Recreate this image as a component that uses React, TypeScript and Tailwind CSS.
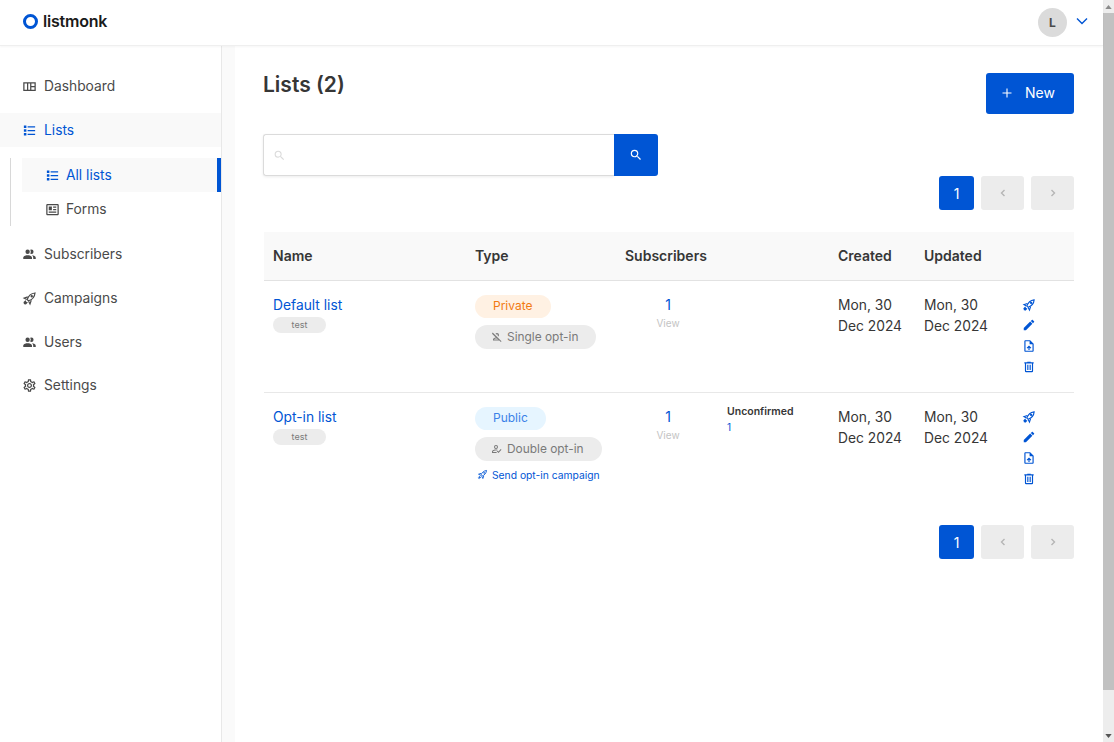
import { MdOutlineSettings } from 'react-icons/md';

const PATHS = {
  list: 'M3,4H7V8H3V4M9,5V7H21V5H9M3,10H7V14H3V10M9,11V13H21V11H9M3,16H7V20H3V16M9,17V19H21V17H9',
  people:
    'M16 17V19H2V17S2 13 9 13 16 17 16 17M12.5 7.5A3.5 3.5 0 1 0 9 11A3.5 3.5 0 0 0 12.5 7.5M15.94 13A5.32 5.32 0 0 1 18 17V19H22V17S22 13.37 15.94 13M15 4A3.39 3.39 0 0 0 13.07 4.59A5 5 0 0 1 13.07 10.41A3.39 3.39 0 0 0 15 11A3.5 3.5 0 0 0 15 4Z',
  magnify:
    'M9.5,3A6.5,6.5 0 0,1 16,9.5C16,11.11 15.41,12.59 14.44,13.73L14.71,14H15.5L20.5,19L19,20.5L14,15.5V14.71L13.73,14.44C12.59,15.41 11.11,16 9.5,16A6.5,6.5 0 0,1 3,9.5A6.5,6.5 0 0,1 9.5,3M9.5,5C7,5 5,7 5,9.5C5,12 7,14 9.5,14C12,14 14,12 14,9.5C14,7 12,5 9.5,5Z',
  pencil:
    'M20.71,7.04C21.1,6.65 21.1,6 20.71,5.63L18.37,3.29C18,2.9 17.35,2.9 16.96,3.29L15.12,5.12L18.87,8.87M3,17.25V21H6.75L17.81,9.93L14.06,6.18L3,17.25Z',
  trash:
    'M9,3V4H4V6H5V19A2,2 0 0,0 7,21H17A2,2 0 0,0 19,19V6H20V4H15V3H9M7,6H17V19H7V6M9,8V17H11V8H9M13,8V17H15V8H13Z',
  upload:
    'M14,2H6C4.89,2 4,2.9 4,4V20C4,21.1 4.89,22 6,22H18C19.1,22 20,21.1 20,20V8L14,2M18,20H6V4H13V9H18V20M8,15.01L9.41,16.42L11,14.84V19H13V14.84L14.59,16.43L16,15.01L12.01,11L8,15.01Z',
  dashboard: 'M2 5H22V19H2V5M4 7V17H8V7H4M10 7V17H13V7H10M15 7V11H20V7H15M15 13V17H20V13H15Z',
  newspaper:
    'M20 3H4C2.89 3 2 3.89 2 5V19C2 20.11 2.89 21 4 21H20C21.11 21 22 20.11 22 19V5C22 3.89 21.11 3 20 3M20 19H4V5H20V19M6 7H11V13H6V7M13 7H18V9H13V7M13 11H18V13H13V11M6 15H18V17H6V15Z',
  accountOff:
    'M12 4A4 4 0 0 1 16 8A4 4 0 0 1 14.6 11L13.2 9.6A2 2 0 0 0 10.4 6.8L9 5.4A4 4 0 0 1 12 4M3.3 3L21 20.7L19.7 22L16.7 19H4V17C4 15 6.5 13.6 9.6 13.1L2 5.3L3.3 3M6 17H14.7L11.6 14.9C8.5 15 6 16 6 17Z',
  accountCheck:
    'M10 4A4 4 0 0 1 14 8A4 4 0 0 1 10 12A4 4 0 0 1 6 8A4 4 0 0 1 10 4M10 6A2 2 0 0 0 8 8A2 2 0 0 0 10 10A2 2 0 0 0 12 8A2 2 0 0 0 10 6M10 13C11 13 12 13.1 13 13.4L11.3 15.1C10.9 15 10.4 15 10 15C7 15 4 16.4 4 17V18H10.5L12 20H2V17C2 14.3 7.3 13 10 13M19.5 12L21 13.5L15 20L11.5 16.5L13 15L15 17L19.5 12Z',
};

type IconName = keyof typeof PATHS;

function Icon({ name, className }: { name: IconName; className: string }) {
  return (
    <svg viewBox="0 0 24 24" fill="currentColor" className={className}>
      <path d={PATHS[name]} />
    </svg>
  );
}

// outlined rocket, long body pointing up-right with two fins and exhaust marks
function Rocket({ className }: { className: string }) {
  return (
    <svg viewBox="0 0 24 24" fill="none" stroke="currentColor" strokeWidth="1.9" className={className}>
      <path d="M9.3 14.8L8.4 13.6C10 8.6 14.6 3.9 20.8 3.2C20.3 9.4 15.6 14 10.6 15.7Z" />
      <path d="M9.2 9.4L3.4 11.4L7.6 13.6M14.8 14.9L12.8 20.8L10.6 16.4" />
      <circle cx="15.6" cy="8.5" r="1" />
      <path d="M6.2 15.4L2.8 18.8M8.6 17.8L5.2 21.2M6.8 17.2L3.2 20.8" />
    </svg>
  );
}

function NavItem({
  icon,
  label,
  active,
  className = '',
}: {
  icon: React.ReactNode;
  label: string;
  active?: boolean;
  className?: string;
}) {
  return (
    <a
      className={`flex h-[34px] items-center gap-[7px] pl-[22px] text-[13.8px] ${
        active ? 'bg-[#f9f9f9] text-[#0055d4]' : 'text-[#4a4a4a]'
      } ${className}`}
    >
      {icon}
      <span>{label}</span>
    </a>
  );
}

function Sidebar() {
  return (
    <aside className="w-[222px] shrink-0 border-r border-[#e8e8e8] pt-[23px]">
      <div className="flex flex-col gap-[10px]">
        <NavItem label="Dashboard" icon={<Icon name="dashboard" className="h-[15px] w-[15px]" />} />
        <NavItem active label="Lists" icon={<Icon name="list" className="h-[15px] w-[15px]" />} />
      </div>
      <div className="ml-[10px] mt-[11px] border-l border-[#d8d8d8]">
        <a className="ml-[11px] flex h-[34px] items-center gap-[6px] border-r-4 border-[#0055d4] bg-[#f9f9f9] pl-[23px] text-[13.8px] text-[#0055d4]">
          <Icon name="list" className="h-[15px] w-[15px]" />
          <span>All lists</span>
        </a>
        <a className="ml-[11px] flex h-[34px] items-center gap-[6px] pl-[23px] text-[13.8px] text-[#4a4a4a]">
          <Icon name="newspaper" className="h-[15px] w-[15px]" />
          <span>Forms</span>
        </a>
      </div>
      <div className="mt-[11px] flex flex-col gap-[10px]">
        <NavItem label="Subscribers" icon={<Icon name="people" className="h-[15px] w-[15px]" />} />
        <NavItem label="Campaigns" icon={<Rocket className="h-[15px] w-[15px]" />} />
        <NavItem label="Users" icon={<Icon name="people" className="h-[15px] w-[15px]" />} />
        <NavItem
          label="Settings"
          className="mt-[-1px]"
          icon={<MdOutlineSettings className="h-[15px] w-[15px]" />}
        />
      </div>
    </aside>
  );
}

function Pagination() {
  return (
    <div className="flex justify-end gap-[7px]">
      <span className="flex h-[34px] w-[35px] items-center justify-center rounded-[3px] bg-[#0055d4] text-[14px] text-white">
        1
      </span>
      <span className="flex h-[34px] w-[43px] items-center justify-center rounded-[3px] bg-[#ececec] text-[#b5b5b5]">
        <svg viewBox="0 0 10 10" className="h-[10px] w-[10px]" fill="none" stroke="currentColor" strokeWidth="1.4">
          <path d="M6.5 2 L3.5 5 L6.5 8" />
        </svg>
      </span>
      <span className="flex h-[34px] w-[43px] items-center justify-center rounded-[3px] bg-[#ececec] text-[#b5b5b5]">
        <svg viewBox="0 0 10 10" className="h-[10px] w-[10px]" fill="none" stroke="currentColor" strokeWidth="1.4">
          <path d="M3.5 2 L6.5 5 L3.5 8" />
        </svg>
      </span>
    </div>
  );
}

function Actions() {
  return (
    <div className="flex flex-col items-start gap-[6.7px] pl-[9px] pt-[4px] text-[#0055d4]">
      <Rocket className="h-[14px] w-[14px]" />
      <Icon name="pencil" className="h-[14px] w-[14px]" />
      <Icon name="upload" className="h-[14px] w-[14px]" />
      <Icon name="trash" className="h-[14px] w-[14px]" />
    </div>
  );
}

function DateCell() {
  return (
    <div className="text-[13.8px] leading-[21px] text-[#363636]">
      Mon, 30
      <br />
      Dec 2024
    </div>
  );
}

function Row({
  name,
  visibility,
  visibilityClass,
  optin,
  optinIcon,
  unconfirmed,
  campaign,
  last,
}: {
  name: string;
  visibility: string;
  visibilityClass: string;
  optin: string;
  optinIcon: IconName;
  unconfirmed?: boolean;
  campaign?: boolean;
  last?: boolean;
}) {
  return (
    <tr className={`align-top ${last ? '' : 'border-b border-[#e8e8e8]'}`}>
      <td className="h-[112px] pl-[9px] pt-[14px]">
        <a className="block text-[13.8px] leading-[21px] text-[#0055d4]">{name}</a>
        <span className="mt-[1px] flex h-[16px] w-[53px] items-center justify-center rounded-full bg-[#ececec] text-[9px] text-[#7a7a7a]">
          test
        </span>
      </td>
      <td className="pl-[9px] pt-[14px]">
        <span
          className={`flex h-[23.5px] w-fit items-center rounded-full px-[18px] text-[12px] ${visibilityClass}`}
        >
          {visibility}
        </span>
        <span className="mt-[7px] flex h-[23.5px] w-fit items-center gap-[4px] rounded-full bg-[#ececec] pl-[16px] pr-[18px] text-[11.9px] text-[#7a7a7a]">
          <Icon name={optinIcon} className="h-[12px] w-[12px]" />
          {optin}
        </span>
        {campaign && (
          <a className="mt-[6px] flex items-center gap-[4px] pl-[2px] text-[10.3px] leading-[16px] text-[#0055d4]">
            <Rocket className="h-[11px] w-[11px]" />
            Send opt-in campaign
          </a>
        )}
      </td>
      <td className="pl-[9px] pt-[13px]">
        <div className="flex">
          <div className="w-[86px] text-center">
            <div className="text-[14px] leading-[21px] text-[#0055d4]">1</div>
            <div className="mt-[1px] text-[10px] leading-[14px] text-[#c4c4c4]">View</div>
          </div>
          {unconfirmed && (
            <div className="ml-[16px] mt-[-2px]">
              <div className="text-[10.5px] font-semibold leading-[15px] text-[#363636]">Unconfirmed</div>
              <div className="text-[10px] leading-[16px] text-[#0055d4]">1</div>
            </div>
          )}
        </div>
      </td>
      <td className="pl-[9px] pt-[14px]">
        <DateCell />
      </td>
      <td className="pl-[9px] pt-[14px]">
        <DateCell />
      </td>
      <td className="pt-[13px]">
        <Actions />
      </td>
    </tr>
  );
}

export default function App() {
  return (
    <div className="flex h-screen overflow-hidden bg-white font-['Inter',sans-serif]">
      <div className="flex min-w-0 flex-1 flex-col">
        <header className="z-10 flex h-[46px] shrink-0 items-center justify-between border-b border-[#efefef] pl-[23px] pr-[15px] shadow-[0_1px_2px_rgba(0,0,0,0.04)]">
          <div className="mt-[-3px] flex items-center gap-[5px]">
            <span className="h-[15px] w-[15px] rounded-full border-[3.5px] border-[#0055d4]" />
            <span className="text-[16px] font-semibold leading-none tracking-[-0.2px] text-[#1a1a1a]">listmonk</span>
          </div>
          <div className="flex items-center gap-[9px]">
            <span className="flex h-[29px] w-[29px] items-center justify-center rounded-full bg-[#dbdbdb] text-[12px] font-bold text-[#4a4a4a]">
              L
            </span>
            <svg viewBox="0 0 12 8" className="mt-[-4px] h-[8px] w-[12px] text-[#0055d4]" fill="none" stroke="currentColor" strokeWidth="1.4">
              <path d="M1 1.5 L6 6.5 L11 1.5" />
            </svg>
          </div>
        </header>
        <div className="flex min-h-0 flex-1">
          <Sidebar />
          <div className="w-[13px] shrink-0 bg-[#fafafa]" />
          <main className="min-w-0 flex-1 pl-[28px] pr-[29px] pt-[27px]">
            <div className="flex items-start justify-between">
              <h1 className="text-[21px] font-semibold leading-[23px] text-[#363636]">Lists (2)</h1>
              <button className="flex h-[41px] w-[88px] items-center justify-center gap-[13px] rounded-[3px] bg-[#0055d4] pb-[2px] pr-[3px] text-[14px] text-white">
                <svg viewBox="0 0 10 10" className="h-[10px] w-[10px]" fill="none" stroke="currentColor" strokeWidth="1.1">
                  <path d="M5 0.5 V9.5 M0.5 5 H9.5" />
                </svg>
                New
              </button>
            </div>
            <div className="mt-[20px] flex h-[42px] w-[395px]">
              <div className="flex flex-1 items-center rounded-l-[3px] border border-r-0 border-[#dbdbdb] pl-[9px] shadow-[0_1px_3px_rgba(0,0,0,0.08)]">
                <Icon name="magnify" className="h-[13px] w-[13px] text-[#dbdbdb]" />
              </div>
              <button className="flex w-[44px] items-center justify-center rounded-r-[3px] bg-[#0055d4] text-white">
                <Icon name="magnify" className="h-[14px] w-[14px]" />
              </button>
            </div>
            <Pagination />
            <div className="pl-[1px]">
              <table className="mt-[22px] w-full table-fixed border-collapse">
                <thead>
                  <tr className="h-[48px] border-b border-[#e2e2e2] bg-[#f9f9f9] text-left text-[14px] text-[#363636]">
                    <th className="w-[202px] pb-[1px] pl-[9px] font-semibold">Name</th>
                    <th className="w-[150px] pb-[1px] pl-[9px] font-semibold">Type</th>
                    <th className="w-[213px] pb-[1px] pl-[9px] font-semibold">Subscribers</th>
                    <th className="w-[86px] pb-[1px] pl-[9px] font-semibold">Created</th>
                    <th className="w-[98px] pb-[1px] pl-[9px] font-semibold">Updated</th>
                    <th />
                  </tr>
                </thead>
                <tbody>
                  <Row
                    name="Default list"
                    visibility="Private"
                    visibilityClass="bg-[#fff1e3] text-[#f27a12]"
                    optin="Single opt-in"
                    optinIcon="accountOff"
                  />
                  <Row
                    last
                    name="Opt-in list"
                    visibility="Public"
                    visibilityClass="bg-[#e6f5ff] text-[#3b82e8]"
                    optin="Double opt-in"
                    optinIcon="accountCheck"
                    unconfirmed
                    campaign
                  />
                </tbody>
              </table>
            </div>
            <div className="mt-[21px]">
              <Pagination />
            </div>
          </main>
        </div>
      </div>
      <div className="flex w-[11px] shrink-0 flex-col bg-[#ededed]">
        <span className="flex h-[13px] items-center justify-center text-[#8a8a8a]">
          <svg viewBox="0 0 8 5" className="h-[4px] w-[7px]" fill="currentColor"><path d="M4 0 L8 5 H0 Z" /></svg>
        </span>
        <div className="h-[677px] bg-[#c1c1c1]" />
        <span className="mt-auto flex h-[13px] items-center justify-center text-[#555555]">
          <svg viewBox="0 0 8 5" className="h-[4px] w-[7px]" fill="currentColor"><path d="M0 0 H8 L4 5 Z" /></svg>
        </span>
      </div>
    </div>
  );
}
